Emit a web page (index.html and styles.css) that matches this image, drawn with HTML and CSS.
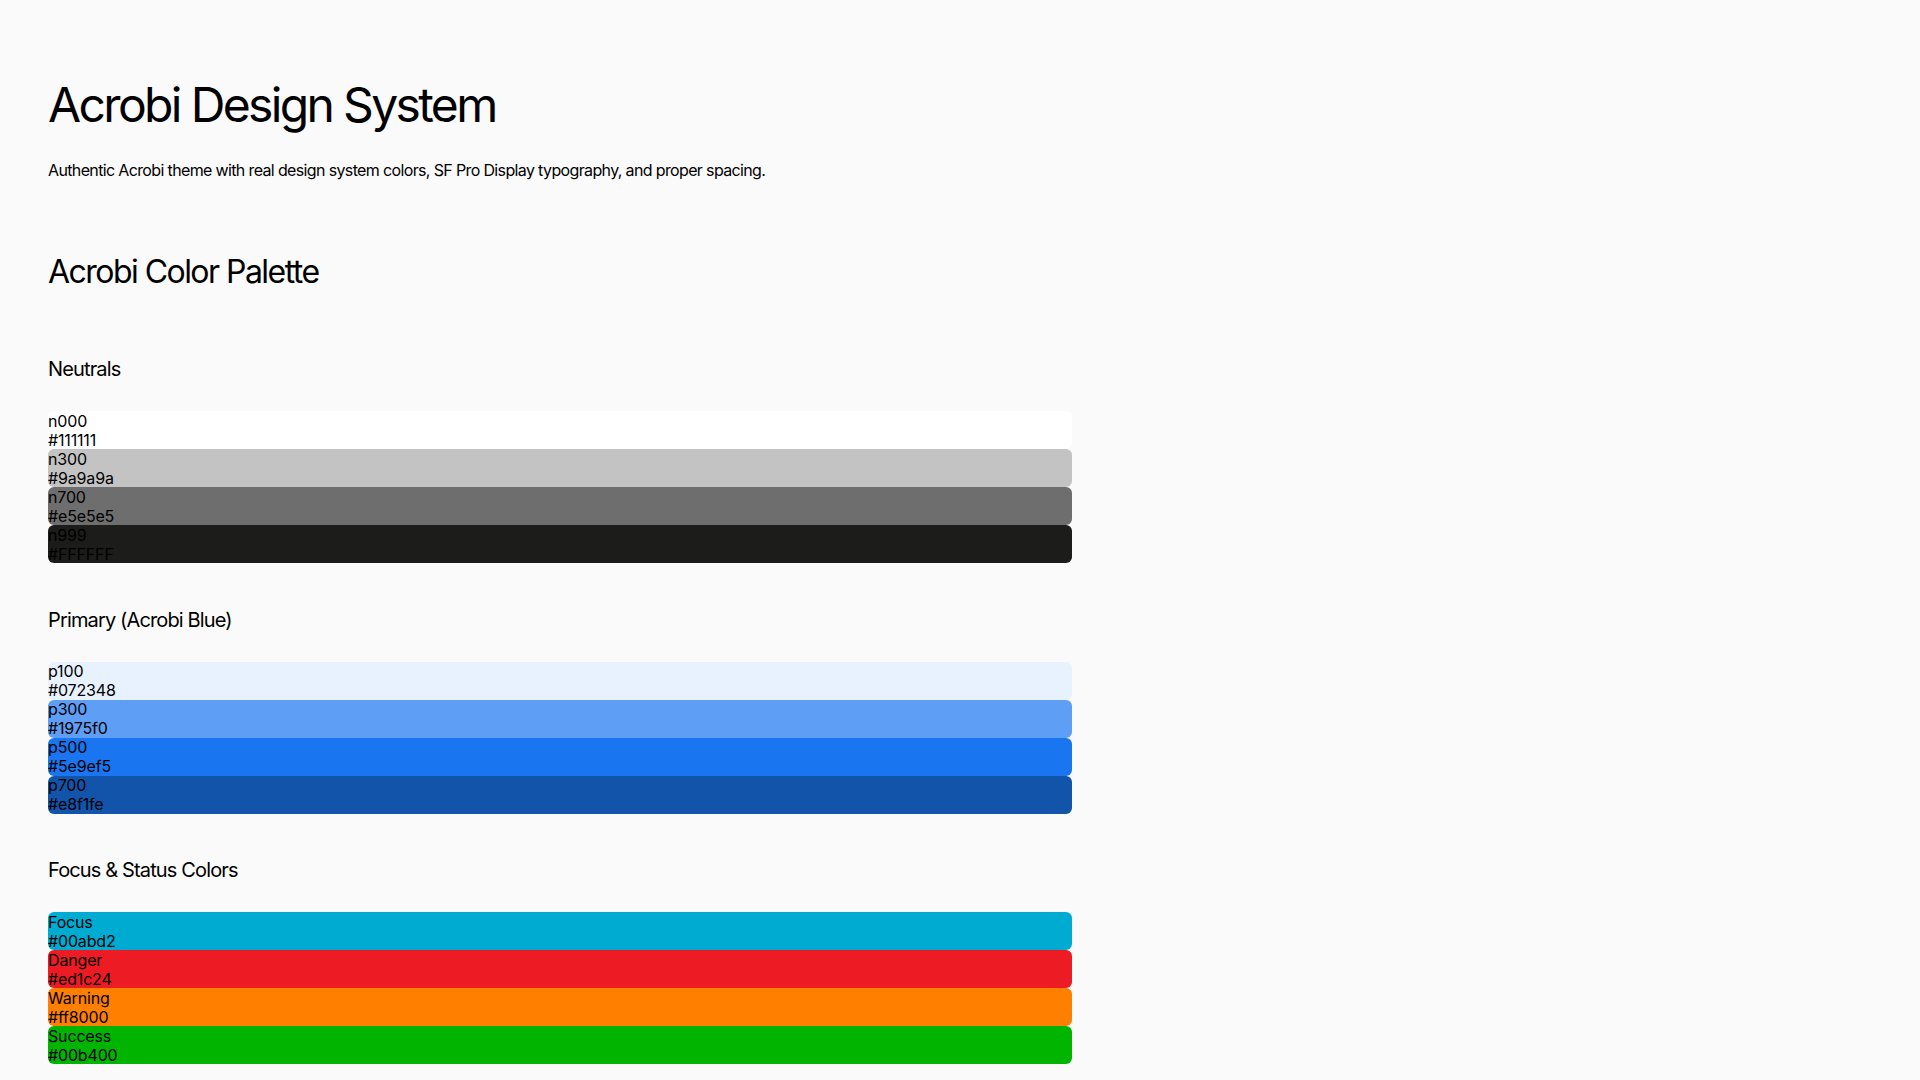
FILE: index.html
```html
<!DOCTYPE html>
<html lang="en">
<head>
<meta charset="utf-8">
<title>Acrobi Design System</title>
<link rel="stylesheet" href="styles.css">
</head>
<body>
<main class="page">
  <h1 class="title">Acrobi Design System</h1>
  <p class="subtitle">Authentic Acrobi theme with real design system colors, SF Pro Display typography, and proper spacing.</p>

  <h2 class="section-title">Acrobi Color Palette</h2>

  <section class="group">
    <h3 class="group-title">Neutrals</h3>
    <div class="swatches">
      <div class="swatch n000"><div>n000</div><div>#111111</div></div>
      <div class="swatch n300"><div>n300</div><div>#9a9a9a</div></div>
      <div class="swatch n700"><div>n700</div><div>#e5e5e5</div></div>
      <div class="swatch n999"><div>n999</div><div>#FFFFFF</div></div>
    </div>
  </section>

  <section class="group">
    <h3 class="group-title">Primary (Acrobi Blue)</h3>
    <div class="swatches">
      <div class="swatch p100"><div>p100</div><div>#072348</div></div>
      <div class="swatch p300"><div>p300</div><div>#1975f0</div></div>
      <div class="swatch p500"><div>p500</div><div>#5e9ef5</div></div>
      <div class="swatch p700"><div>p700</div><div>#e8f1fe</div></div>
    </div>
  </section>

  <section class="group">
    <h3 class="group-title">Focus &amp; Status Colors</h3>
    <div class="swatches">
      <div class="swatch focus"><div>Focus</div><div>#00abd2</div></div>
      <div class="swatch danger"><div>Danger</div><div>#ed1c24</div></div>
      <div class="swatch warning"><div>Warning</div><div>#ff8000</div></div>
      <div class="swatch success"><div>Success</div><div>#00b400</div></div>
    </div>
  </section>
</main>
</body>
</html>
```

FILE: styles.css
```css
html, body {
  margin: 0;
  padding: 0;
  background: #fafafa;
}

body {
  font-family: Inter, "Liberation Sans", sans-serif;
  color: #000;
}

.page {
  width: 1024px;
  padding: 76px 48px 40px 48px;
}

.title {
  margin: 0;
  font-size: 48px;
  line-height: 57px;
  font-weight: 400;
  letter-spacing: -0.055em;
}

.subtitle {
  margin: 28px 0 0 0;
  font-size: 16px;
  line-height: 19px;
  letter-spacing: -0.04em;
}

.section-title {
  margin: 73px 0 0 0;
  font-size: 32px;
  line-height: 38px;
  font-weight: 400;
  letter-spacing: -0.048em;
}

.group {
  margin-top: 66px;
}

.group + .group {
  margin-top: 44.5px;
}

.group-title {
  margin: 0 0 30px 0;
  font-size: 20px;
  line-height: 24px;
  font-weight: 400;
  letter-spacing: -0.043em;
}

.swatches {
  display: flex;
  flex-direction: column;
}

.swatch {
  height: 38px;
  border-radius: 6px;
  font-size: 16px;
  line-height: 19px;
  padding-top: 0.5px;
  box-sizing: border-box;
  color: #000;
  letter-spacing: -0.01em;
}

.n000 { background: #ffffff; }
.n300 { background: #c3c3c3; }
.n700 { background: #6e6e6e; }
.n999 { background: #1c1c1b; }

.p100 { background: #e8f1fe; }
.p300 { background: #5e9ef5; }
.p500 { background: #1975f0; }
.p700 { background: #1254aa; }

.focus { background: #00abd2; }
.danger { background: #ed1c24; }
.warning { background: #ff8000; }
.success { background: #00b400; }
```
